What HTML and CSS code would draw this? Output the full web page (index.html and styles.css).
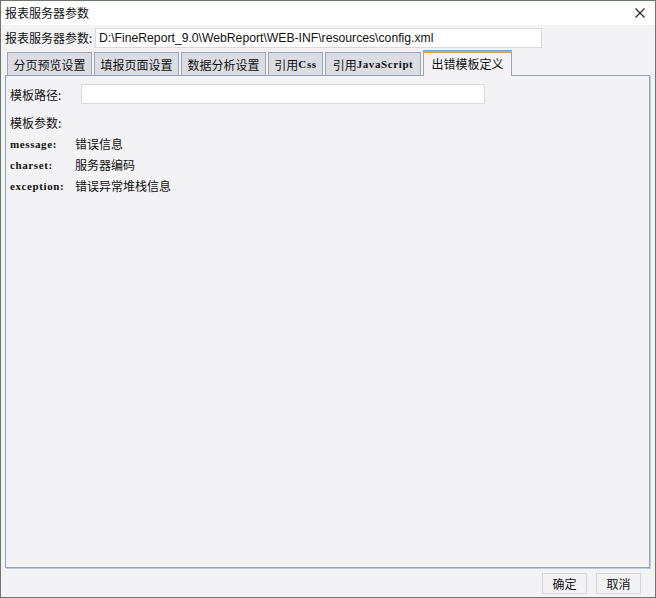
FILE: index.html
```html
<!DOCTYPE html>
<html>
<head>
<meta charset="utf-8">
<link rel="stylesheet" href="styles.css">
</head>
<body>
<div class="window">
  <div class="titlebar">
    <span class="title">报表服务器参数</span>
    <svg class="close" width="12" height="12" viewBox="0 0 12 12"><path d="M1.5 1.5 L10.5 10.5 M10.5 1.5 L1.5 10.5" stroke="#222" stroke-width="1.1" fill="none"/></svg>
  </div>
  <div class="main">
    <div class="pathrow">
      <span class="label">报表服务器参数:</span>
      <div class="pathbox">D:\FineReport_9.0\WebReport\WEB-INF\resources\config.xml</div>
    </div>
    <div class="tabs">
      <div class="tab w-cjk">分页预览设置</div>
      <div class="tab w-cjk">填报页面设置</div>
      <div class="tab w-cjk">数据分析设置</div>
      <div class="tab w-css">引用<span class="mono">Css</span></div>
      <div class="tab w-js">引用<span class="mono">JavaScript</span></div>
      <div class="tab active">出错模板定义</div>
    </div>
    <div class="panel">
      <div class="row first">
        <span class="plabel">模板路径:</span>
        <div class="tplbox"></div>
      </div>
      <div class="row params">模板参数:</div>
      <div class="row param"><span class="pname mono">message:</span><span>错误信息</span></div>
      <div class="row param"><span class="pname mono">charset:</span><span>服务器编码</span></div>
      <div class="row param"><span class="pname mono">exception:</span><span>错误异常堆栈信息</span></div>
    </div>
    <div class="footer">
      <div class="btn">确定</div>
      <div class="btn">取消</div>
    </div>
  </div>
</div>
</body>
</html>
```
FILE: styles.css
```css
html, body {
  margin: 0;
  padding: 0;
}
body {
  font-family: "Noto Sans CJK SC", "Liberation Sans", sans-serif;
  font-size: 12px;
  color: #111;
}
.window {
  width: 656px;
  height: 598px;
  box-sizing: border-box;
  border: 1px solid #6b786b;
  display: flex;
  flex-direction: column;
  background: #f3f3f5;
}
.titlebar {
  height: 24px;
  background: #fff;
  display: flex;
  align-items: center;
  justify-content: space-between;
  padding: 0 9px 0 4px;
  flex: none;
}
.title {
  line-height: 16px;
}
.main {
  flex: 1;
  display: flex;
  flex-direction: column;
  padding: 0 5px 0 4px;
}
.pathrow {
  display: flex;
  align-items: center;
  height: 20px;
  margin-top: 3px;
}
.label {
  width: 90px;
  line-height: 16px;
}
.pathbox {
  width: 442px;
  height: 18px;
  border: 1px solid #dadada;
  background: #fff;
  font-family: "Liberation Sans", sans-serif;
  font-size: 12.2px;
  line-height: 18px;
  padding-left: 3px;
}
.tabs {
  display: flex;
  align-items: flex-end;
  gap: 2px;
  padding-left: 2px;
  height: 27px;
}
.tab {
  height: 23px;
  box-sizing: border-box;
  border: 1px solid #9ba7b9;
  border-bottom: none;
  background: #dcdde3;
  display: flex;
  align-items: center;
  justify-content: center;
}
.w-cjk { width: 85px; }
.w-css { width: 55px; }
.w-js { width: 96px; }
.tab.active {
  width: 89px;
  height: 26px;
  background: #f3f3f5;
  border-top: 1px solid #7fa6d8;
  box-shadow: inset 0 2px 0 #e6a43a;
  margin-bottom: -1px;
  position: relative;
  z-index: 1;
}
.mono {
  font-family: "Liberation Serif", serif;
  font-weight: bold;
  font-size: 11px;
  letter-spacing: 0.6px;
}
.panel {
  height: 493px;
  box-sizing: border-box;
  border: 1px solid #93a3bd;
  box-shadow: 1px 1px 0 #c4cad6;
  width: 645px;
  padding: 0 4px;
}
.row {
  display: flex;
  align-items: center;
  height: 21px;
}
.row.first {
  margin-top: 8px;
  height: 20px;
}
.plabel {
  width: 71px;
}
.tplbox {
  width: 402px;
  height: 18px;
  border: 1px solid #dadada;
  background: #fff;
}
.row.params {
  margin-top: 8px;
}
.pname {
  width: 65px;
}
.footer {
  display: flex;
  justify-content: flex-end;
  gap: 9px;
  margin-top: 5px;
  padding-right: 9px;
}
.btn {
  width: 43px;
  height: 19px;
  border: 1px solid #d6d6d6;
  display: flex;
  align-items: center;
  justify-content: center;
}
```
